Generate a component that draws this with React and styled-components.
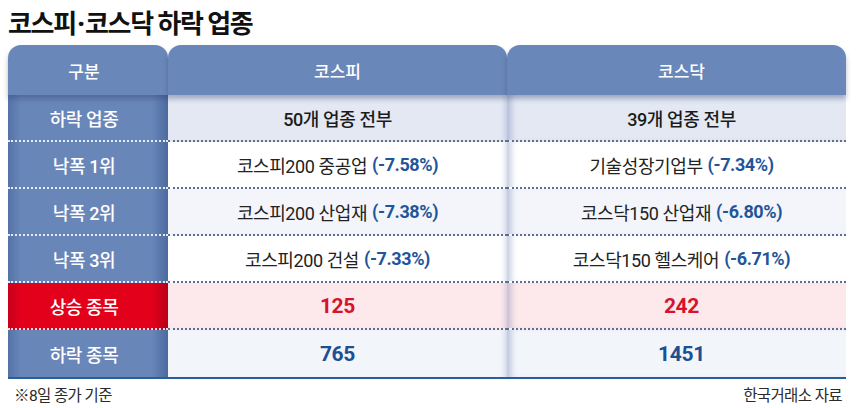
import React from 'react';
import styled, { createGlobalStyle, css } from 'styled-components';

const GlobalStyle = createGlobalStyle`
  body {
    margin: 0;
    background: #ffffff;
    font-family: Roboto, "Noto Sans CJK KR", "Noto Sans", sans-serif;
  }
`;

const Page = styled.div`
  width: 860px;
  height: 408px;
  padding: 0 14px 0 8px;
  box-sizing: border-box;
  overflow: hidden;
`;

const Title = styled.h1`
  margin: 0;
  height: 45px;
  line-height: 44px;
  font-family: "Noto Sans CJK KR", sans-serif;
  font-size: 26px;
  font-weight: 700;
  letter-spacing: -1.3px;
  color: #111111;
`;

const Dot = styled.span`
  font-family: Roboto, "Liberation Sans", sans-serif;
  font-weight: 900;
  margin: 0 1px;
`;

const Table = styled.div`
  display: grid;
  grid-template-columns: 160px 339px 339px;
  grid-template-rows: 50px repeat(6, 47px);
  border-bottom: 2px solid #2b5d9c;
`;

const Tab = styled.div`
  position: relative;
  z-index: 2;
  display: flex;
  align-items: center;
  justify-content: center;
  background: #6a87b9;
  border-radius: 13px 13px 0 0;
  box-shadow: 0 4px 5px rgba(40, 60, 100, 0.35);
  color: #ffffff;
  font-size: 17px;
  font-weight: 500;
  padding: ${(p) => p.$pad || '0'};
`;

const Label = styled.div`
  display: flex;
  align-items: center;
  justify-content: center;
  padding-right: 8px;
  color: #ffffff;
  font-size: 18px;
  font-weight: 500;
  letter-spacing: -0.4px;
  background: ${(p) =>
    p.$red
      ? 'linear-gradient(90deg, #c8001a 0, #e2001b 8%, #e2001b 90%, #b90018 100%)'
      : 'linear-gradient(90deg, #5673a8 0, #6986b9 8%, #6986b9 90%, #4d6aa0 100%)'};
  border-bottom: ${(p) => (p.$last ? 'none' : '2px dotted rgba(255,255,255,0.85)')};
  box-sizing: border-box;
`;

const Cell = styled.div`
  display: flex;
  align-items: center;
  justify-content: center;
  background: ${(p) => p.$bg};
  color: #222222;
  font-size: 18px;
  letter-spacing: -0.4px;
  border-bottom: ${(p) => (p.$last ? 'none' : '2px dotted #5c6f8f')};
  box-sizing: border-box;
  ${(p) =>
    p.$right &&
    css`
      padding-left: 10px;
      box-shadow: inset 8px 0 6px -4px rgba(90, 110, 170, 0.35);
    `}
  ${(p) =>
    p.$mid &&
    css`
      box-shadow: inset -6px 0 5px -4px rgba(90, 110, 170, 0.25);
    `}
`;

const Strong = styled.span`
  font-weight: 500;
  color: #1b1b1b;
`;

const Pct = styled.span`
  margin-left: 5px;
  font-weight: 700;
  color: #1f5599;
`;

const Num = styled.span`
  font-size: 21px;
  font-weight: 700;
  letter-spacing: -0.3px;
  color: ${(p) => (p.$red ? '#d5142b' : '#1d4f94')};
`;

const Footer = styled.div`
  display: flex;
  justify-content: space-between;
  padding: 4px 4px 0 6px;
  font-size: 15.5px;
  letter-spacing: -0.6px;
  color: #2a2a2a;
`;

const rows = [
  { label: '하락 업종', bg: '#e3e8f3', kospi: <Strong>50개 업종 전부</Strong>, kosdaq: <Strong>39개 업종 전부</Strong> },
  { label: '낙폭 1위', bg: '#ffffff', kospi: ['코스피200 중공업', '(-7.58%)'], kosdaq: ['기술성장기업부', '(-7.34%)'] },
  { label: '낙폭 2위', bg: '#f3f5fa', kospi: ['코스피200 산업재', '(-7.38%)'], kosdaq: ['코스닥150 산업재', '(-6.80%)'] },
  { label: '낙폭 3위', bg: '#ffffff', kospi: ['코스피200 건설', '(-7.33%)'], kosdaq: ['코스닥150 헬스케어', '(-6.71%)'] },
  { label: '상승 종목', bg: '#fde8eb', red: true, kospi: <Num $red>125</Num>, kosdaq: <Num $red>242</Num> },
  { label: '하락 종목', bg: '#f2f5fa', kospi: <Num>765</Num>, kosdaq: <Num>1451</Num> },
];

const renderValue = (v) =>
  Array.isArray(v) ? (
    <>
      {v[0]}
      <Pct>{v[1]}</Pct>
    </>
  ) : (
    v
  );

export default function App() {
  return (
    <Page>
      <GlobalStyle />
      <Title>
        코스피<Dot>·</Dot>코스닥 하락 업종
      </Title>
      <Table>
        <Tab $pad="0 8px 0 0">구분</Tab>
        <Tab>코스피</Tab>
        <Tab $pad="0 0 0 10px">코스닥</Tab>
        {rows.map((r, i) => {
          const last = i === rows.length - 1;
          return (
            <React.Fragment key={r.label}>
              <Label $red={r.red} $last={last}>{r.label}</Label>
              <Cell $bg={r.bg} $last={last} $mid>{renderValue(r.kospi)}</Cell>
              <Cell $bg={r.bg} $last={last} $right>{renderValue(r.kosdaq)}</Cell>
            </React.Fragment>
          );
        })}
      </Table>
      <Footer>
        <span>※8일 종가 기준</span>
        <span>한국거래소 자료</span>
      </Footer>
    </Page>
  );
}
